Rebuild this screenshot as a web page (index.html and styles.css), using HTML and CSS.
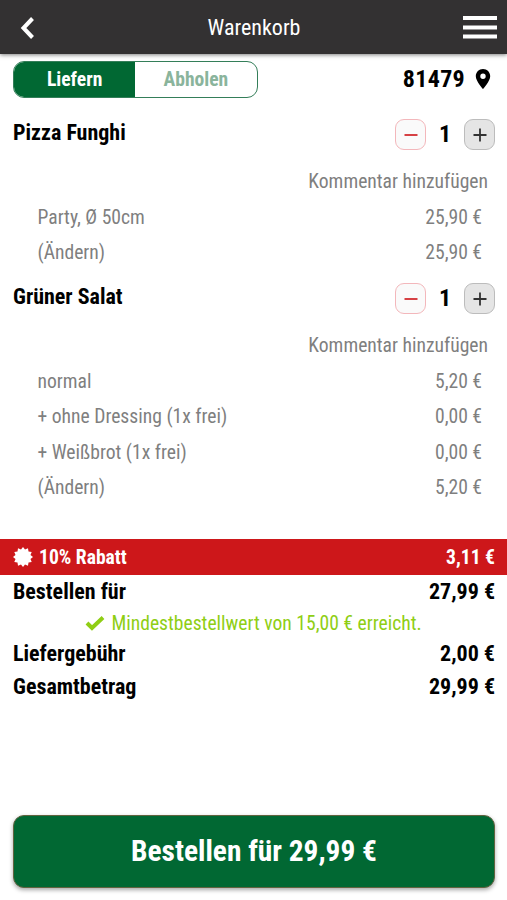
FILE: index.html
```html
<!DOCTYPE html>
<html lang="de">
<head>
<meta charset="utf-8">
<title>Warenkorb</title>
<link rel="stylesheet" href="styles.css">
</head>
<body>
<header class="topbar">
  <svg class="back" viewBox="0 0 16 24"><path d="M12.500 2.500 3.500 12 12.500 21.500"/></svg>
  <h1>Warenkorb</h1>
  <svg class="menu" viewBox="0 0 34 24"><path d="M0 2h34M0 11.500h34M0 20.500h34"/></svg>
</header>
<main>
  <div class="delivery">
    <div class="toggle"><span class="active">Liefern</span><span class="inactive">Abholen</span></div>
    <div class="zip"><span>81479</span><svg class="pin" viewBox="0 0 16 22"><path fill-rule="evenodd" d="M8 1C3.900 1 .8 4.200.8 8.200.8 13 8 21 8 21s7.200-8 7.200-12.800C15.200 4.200 12.100 1 8 1Zm0 4.500a2.700 2.700 0 1 1 0 5.400 2.700 2.700 0 0 1 0-5.400Z"/></svg></div>
  </div>
  <section class="item">
    <div class="head"><h2>Pizza Funghi</h2>
      <div class="stepper"><button class="minus"><svg viewBox="0 0 14 14"><path d="M.5 7h13"/></svg></button><b>1</b><button class="plus"><svg viewBox="0 0 14 14"><path d="M.5 7h13M7 .5v13"/></svg></button></div></div>
    <div class="comment"><span>Kommentar hinzufügen</span></div>
    <div class="option"><span>Party, Ø 50cm</span><span>25,90 €</span></div>
    <div class="option"><span>(Ändern)</span><span>25,90 €</span></div>
  </section>
  <section class="item">
    <div class="head"><h2>Grüner Salat</h2>
      <div class="stepper"><button class="minus"><svg viewBox="0 0 14 14"><path d="M.5 7h13"/></svg></button><b>1</b><button class="plus"><svg viewBox="0 0 14 14"><path d="M.5 7h13M7 .5v13"/></svg></button></div></div>
    <div class="comment"><span>Kommentar hinzufügen</span></div>
    <div class="option"><span>normal</span><span>5,20 €</span></div>
    <div class="option"><span>+ ohne Dressing (1x frei)</span><span>0,00 €</span></div>
    <div class="option"><span>+ Weißbrot (1x frei)</span><span>0,00 €</span></div>
    <div class="option"><span>(Ändern)</span><span>5,20 €</span></div>
  </section>
  <div class="discount">
    <svg class="badge" viewBox="0 0 20 20"><path d="M10.000 0.000 12.000 2.500 15.000 1.300 15.500 4.500 18.700 5.000 17.500 8.000 20.000 10.000 17.500 12.000 18.700 15.000 15.500 15.500 15.000 18.700 12.000 17.500 10.000 20.000 8.000 17.500 5.000 18.700 4.500 15.500 1.300 15.000 2.500 12.000 0.000 10.000 2.500 8.000 1.300 5.000 4.500 4.500 5.000 1.300 8.000 2.500Z"/></svg>
    <span>10% Rabatt</span><span class="amount">3,11 €</span>
  </div>
  <div class="sum"><span>Bestellen für</span><span>27,99 €</span></div>
  <div class="note"><svg class="check" viewBox="0 0 20 16"><path d="M2 8 7 13 18 2.500"/></svg><span>Mindestbestellwert von 15,00 € erreicht.</span></div>
  <div class="sum"><span>Liefergebühr</span><span>2,00 €</span></div>
  <div class="sum"><span>Gesamtbetrag</span><span>29,99 €</span></div>
</main>
<button class="order"><span>Bestellen für 29,99 €</span></button>
</body>
</html>
```
FILE: styles.css
```css
* { box-sizing: border-box; }
body {
  margin: 0;
  height: 900px;
  display: flex;
  flex-direction: column;
  background: #fff;
  color: #000;
  font-family: "Roboto Condensed", Roboto, sans-serif;
  font-stretch: 75%;
  font-size: 19.600px;
}
h1, h2 { margin: 0; }
button { font: inherit; padding: 0; }
svg { display: block; flex: none; }
.topbar {
  height: 54px;
  display: flex;
  align-items: center;
  justify-content: space-between;
  padding: 1px 10px 0 20px;
  background: #333132;
  color: #fff;
  box-shadow: 0 1px 4px rgba(0, 0, 0, .5);
}
.topbar h1 { font-size: 22px; font-weight: 400; padding-left: 9px; }
.topbar path { fill: none; stroke: #fff; stroke-width: 4; }
.back { width: 16px; height: 24px; }
.menu { width: 34px; height: 24px; }
main { flex: 1; }
.delivery {
  height: 61px;
  padding: 7px 12px 0 13px;
  display: flex;
  justify-content: space-between;
  align-items: flex-start;
}
.toggle {
  display: flex;
  width: 244.500px;
  height: 36.500px;
  border: 1px solid #347e59;
  border-radius: 11px;
  overflow: hidden;
  font-weight: 700;
}
.toggle span {
  flex: 1;
  display: flex;
  align-items: center;
  justify-content: center;
}
.active { background: #016833; color: #fff; }
.inactive { color: #8ab49c; }
.zip {
  height: 36px;
  display: flex;
  align-items: center;
  gap: 10px;
  padding-right: 4px;
  font-size: 24px;
  font-weight: 700;
  letter-spacing: .3px;
}
.pin { width: 16px; height: 22px; }
.item { padding-bottom: 9px; }
.head {
  height: 48px;
  display: flex;
  justify-content: space-between;
  padding: 4px 12px 0 13px;
}
.head h2 { font-size: 22px; line-height: 27px; }
.stepper { display: flex; height: 31px; }
.stepper b { width: 38px; text-align: center; font-size: 24px; line-height: 31px; }
.stepper button {
  width: 31px;
  height: 31px;
  border-radius: 9px;
  display: flex;
  align-items: center;
  justify-content: center;
}
.stepper svg { width: 14px; height: 14px; }
.stepper path { stroke-width: 1.800; fill: none; }
.minus { background: #fafafa; border: 1px solid #f3b7bb; }
.minus path { stroke: #d22c2f; }
.plus { background: #e5e5e5; border: 1px solid #bcbcbc; }
.plus path { stroke: #333; }
.comment, .option { display: flex; align-items: center; color: #7f7f7f; }
.comment { height: 36px; justify-content: flex-end; padding-right: 19px; }
.option { height: 35.500px; justify-content: space-between; padding: 1px 25px 0 37.500px; }
.discount {
  height: 36px;
  margin-top: 24.500px;
  padding: 1px 12px 0 13px;
  display: flex;
  align-items: center;
  background: #cd171a;
  color: #fff;
  font-weight: 700;
}
.badge { width: 20px; height: 20px; fill: #fff; margin-right: 6px; }
.amount { margin-left: auto; }
.sum {
  height: 33px;
  padding: 0 12px 0 13px;
  display: flex;
  align-items: center;
  justify-content: space-between;
  font-size: 22px;
  font-weight: 700;
}
.note {
  height: 29.500px;
  padding-top: 2px;
  display: flex;
  align-items: center;
  justify-content: center;
  gap: 6px;
  color: #8fce14;
}
.check { width: 20px; height: 16px; fill: none; stroke: #8fce14; stroke-width: 4; }
.order {
  height: 73px;
  margin: 0 12px 12px 13px;
  padding-bottom: 2px;
  border: 1px solid #61633f;
  border-radius: 11px;
  background: #016833;
  color: #fff;
  font-size: 29.400px;
  font-weight: 700;
  box-shadow: 0 2px 4px rgba(0, 0, 0, .35);
}
```
